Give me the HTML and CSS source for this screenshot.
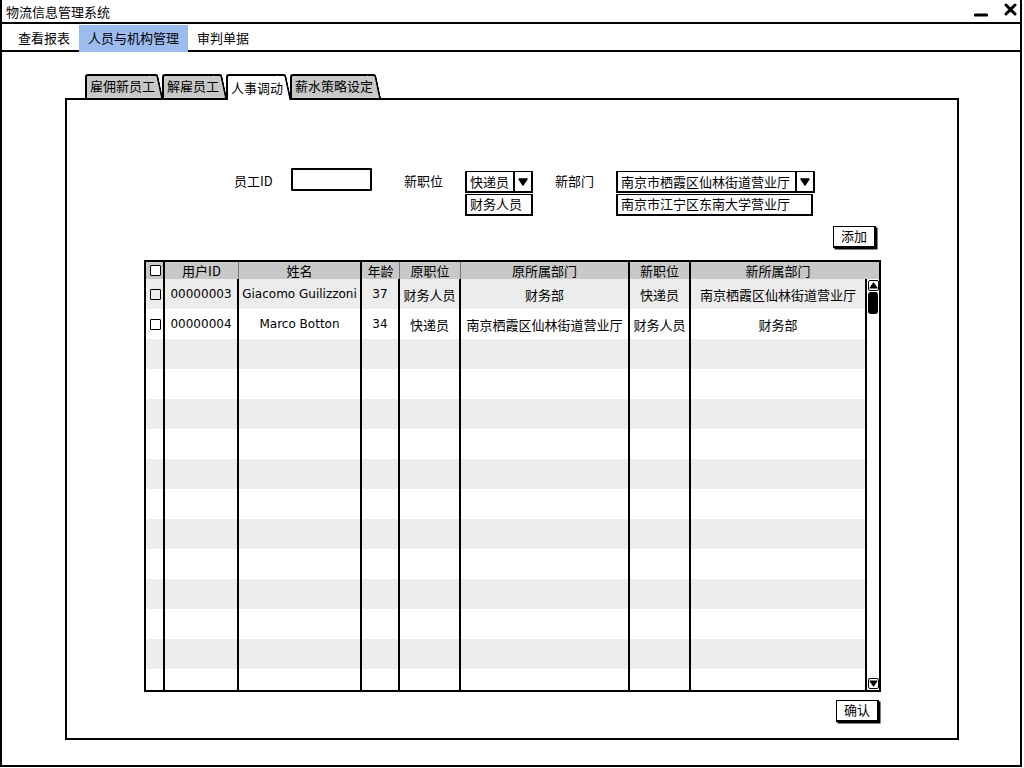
FILE: index.html
```html
<!DOCTYPE html>
<html lang="zh-CN">
<head>
<meta charset="utf-8">
<title>物流信息管理系统</title>
<link rel="stylesheet" href="styles.css">
</head>
<body>
<div class="window">
  <div class="titlebar">
    <span class="title">物流信息管理系统</span>
    <span class="win-ctrls">
      <svg class="ctrl-min" width="14" height="6" viewBox="0 0 14 6"><path d="M1.5 3 H12.5" stroke="#000" stroke-width="3.2" stroke-linecap="round"/></svg>
      <svg class="ctrl-close" width="13" height="13" viewBox="0 0 13 13"><path d="M2 2 L11 11 M11 2 L2 11" stroke="#000" stroke-width="3" stroke-linecap="round"/></svg>
    </span>
  </div>
  <div class="menubar">
    <span class="menu-item">查看报表</span>
    <span class="menu-item active">人员与机构管理</span>
    <span class="menu-item">审判单据</span>
  </div>
  <div class="content">
    <div class="tabs">
      <div class="tab">雇佣新员工</div>
      <div class="tab">解雇员工</div>
      <div class="tab active">人事调动</div>
      <div class="tab">薪水策略设定</div>
    </div>
    <div class="panel">
      <div class="form-row">
        <span class="label lbl-id">员工ID</span>
        <span class="text-input"></span>
        <span class="label lbl-pos">新职位</span>
        <div class="combo combo-pos">
          <div class="select"><span class="sel-text">快递员</span><span class="sel-arrow"><svg width="10" height="8" viewBox="0 0 10 8"><path d="M1 1 H9 L5 7 Z" fill="#000" stroke="#000" stroke-width="1.4" stroke-linejoin="round"/></svg></span></div>
          <div class="option">财务人员</div>
        </div>
        <span class="label lbl-dept">新部门</span>
        <div class="combo combo-dept">
          <div class="select"><span class="sel-text">南京市栖霞区仙林街道营业厅</span><span class="sel-arrow"><svg width="10" height="8" viewBox="0 0 10 8"><path d="M1 1 H9 L5 7 Z" fill="#000" stroke="#000" stroke-width="1.4" stroke-linejoin="round"/></svg></span></div>
          <div class="option">南京市江宁区东南大学营业厅</div>
        </div>
      </div>
      <div class="btn-row add-row"><span class="btn">添加</span></div>
      <div class="grid">
        <div class="thead">
          <span class="th line-b"><span class="check"></span></span>
          <span class="th line-t">用户ID</span>
          <span class="th line-b">姓名</span>
          <span class="th line-t">年龄</span>
          <span class="th line-t">原职位</span>
          <span class="th line-b">原所属部门</span>
          <span class="th line-b">新职位</span>
          <span class="th">新所属部门</span>
          <span class="th"></span>
        </div>
        <div class="tbody">
          <div class="rows">
            <div class="row"><span class="td"><span class="check"></span></span><span class="td lat">00000003</span><span class="td lat">Giacomo Guilizzoni</span><span class="td lat">37</span><span class="td">财务人员</span><span class="td">财务部</span><span class="td">快递员</span><span class="td">南京栖霞区仙林街道营业厅</span></div>
            <div class="row"><span class="td"><span class="check"></span></span><span class="td lat">00000004</span><span class="td lat">Marco Botton</span><span class="td lat">34</span><span class="td">快递员</span><span class="td">南京栖霞区仙林街道营业厅</span><span class="td">财务人员</span><span class="td">财务部</span></div>
            <div class="row"><span class="td"></span><span class="td"></span><span class="td"></span><span class="td"></span><span class="td"></span><span class="td"></span><span class="td"></span><span class="td"></span></div>
            <div class="row"><span class="td"></span><span class="td"></span><span class="td"></span><span class="td"></span><span class="td"></span><span class="td"></span><span class="td"></span><span class="td"></span></div>
            <div class="row"><span class="td"></span><span class="td"></span><span class="td"></span><span class="td"></span><span class="td"></span><span class="td"></span><span class="td"></span><span class="td"></span></div>
            <div class="row"><span class="td"></span><span class="td"></span><span class="td"></span><span class="td"></span><span class="td"></span><span class="td"></span><span class="td"></span><span class="td"></span></div>
            <div class="row"><span class="td"></span><span class="td"></span><span class="td"></span><span class="td"></span><span class="td"></span><span class="td"></span><span class="td"></span><span class="td"></span></div>
            <div class="row"><span class="td"></span><span class="td"></span><span class="td"></span><span class="td"></span><span class="td"></span><span class="td"></span><span class="td"></span><span class="td"></span></div>
            <div class="row"><span class="td"></span><span class="td"></span><span class="td"></span><span class="td"></span><span class="td"></span><span class="td"></span><span class="td"></span><span class="td"></span></div>
            <div class="row"><span class="td"></span><span class="td"></span><span class="td"></span><span class="td"></span><span class="td"></span><span class="td"></span><span class="td"></span><span class="td"></span></div>
            <div class="row"><span class="td"></span><span class="td"></span><span class="td"></span><span class="td"></span><span class="td"></span><span class="td"></span><span class="td"></span><span class="td"></span></div>
            <div class="row"><span class="td"></span><span class="td"></span><span class="td"></span><span class="td"></span><span class="td"></span><span class="td"></span><span class="td"></span><span class="td"></span></div>
            <div class="row"><span class="td"></span><span class="td"></span><span class="td"></span><span class="td"></span><span class="td"></span><span class="td"></span><span class="td"></span><span class="td"></span></div>
            <div class="row"><span class="td"></span><span class="td"></span><span class="td"></span><span class="td"></span><span class="td"></span><span class="td"></span><span class="td"></span><span class="td"></span></div>
          </div>
          <div class="scroll">
            <span class="sb-btn"><svg width="9" height="7" viewBox="0 0 9 7"><path d="M1 6 H8 L4.5 1 Z" fill="#000" stroke="#000" stroke-width="1.2" stroke-linejoin="round"/></svg></span>
            <span class="sb-thumb"></span>
            <span class="sb-space"></span>
            <span class="sb-btn"><svg width="9" height="7" viewBox="0 0 9 7"><path d="M1 1 H8 L4.5 6 Z" fill="#000" stroke="#000" stroke-width="1.2" stroke-linejoin="round"/></svg></span>
          </div>
        </div>
      </div>
      <div class="btn-row confirm-row"><span class="btn">确认</span></div>
    </div>
  </div>
</div>
</body>
</html>
```
FILE: styles.css
```css
* { box-sizing: border-box; }
html, body { margin: 0; padding: 0; background: #fff; }
body {
  font-family: "DejaVu Sans", "Noto Sans CJK SC", sans-serif;
  font-size: 13px;
  color: #000;
}
.window {
  width: 1022px;
  height: 767px;
  border-left: 2px solid #000;
  border-right: 2px solid #000;
  border-bottom: 2px solid #000;
  display: flex;
  flex-direction: column;
}
.titlebar {
  height: 24px;
  border-bottom: 2px solid #000;
  display: flex;
  align-items: center;
  justify-content: space-between;
  padding: 1px 0 0 4px;
}
.title { font-family: "Noto Sans CJK SC", sans-serif; font-size: 13px; line-height: 20px; }
.win-ctrls { display: flex; align-items: center; gap: 16px; padding-right: 3px; }
.ctrl-min { margin-top: 7px; }
.ctrl-close { margin-top: -4px; }
.menubar {
  height: 28px;
  border-bottom: 2px solid #000;
  display: flex;
  padding-left: 7px;
}
.menu-item {
  font-family: "Noto Sans CJK SC", sans-serif;
  padding: 0 9px;
  line-height: 26px;
  height: 27px;
  margin-top: 1px;
}
.menu-item.active { background: #9cbcf0; }
.content { flex: 1; padding: 22px 0 0 63px; }
.tabs { display: flex; height: 24px; padding-left: 20px; }
.tab {
  position: relative;
  z-index: 1;
  height: 24px;
  padding: 0 1px 0 3px;
  margin-right: 6px;
  border: 2px solid #000;
  border-right: none;
  border-bottom: none;
  border-top-left-radius: 3px;
  background: #c8c8c8;
  font-family: "Noto Sans CJK SC", sans-serif;
  line-height: 20px;
}
.tab::after {
  content: "";
  position: absolute;
  z-index: -1;
  top: -2px;
  bottom: 0;
  right: -2px;
  width: 7px;
  background: inherit;
  border-top: 2px solid #000;
  border-right: 2px solid #000;
  border-top-right-radius: 3px;
  transform: skewX(12deg);
  transform-origin: top left;
}
.tab.active {
  background: #fff;
  height: 26px;
  margin-bottom: -2px;
  z-index: 2;
  line-height: 24px;
}
.panel {
  width: 894px;
  height: 642px;
  border: 2px solid #000;
  display: flex;
  flex-direction: column;
}
.form-row {
  display: flex;
  align-items: flex-start;
  margin-top: 68px;
  padding-left: 167px;
}
.label {
  font-family: "Noto Sans CJK SC", sans-serif;
  line-height: 22px;
  margin-top: 2px;
}
.lbl-id { width: 57px; }
.lbl-pos { width: 61px; margin-left: 32px; }
.lbl-dept { width: 61px; margin-left: 22px; }
.text-input {
  width: 81px;
  height: 23px;
  border: 2px solid #000;
  border-radius: 1px;
}
.combo { margin-top: 3px; display: flex; flex-direction: column; font-family: "Noto Sans CJK SC", sans-serif; }
.combo-pos { width: 68px; }
.combo-dept { width: 199px; }
.select {
  height: 22px;
  border: 2px solid #000;
  border-top-width: 1.5px;
  display: flex;
  align-items: stretch;
}
.sel-text { flex: 1; padding-left: 3px; line-height: 19px; white-space: nowrap; overflow: hidden; }
.sel-arrow {
  width: 18px;
  border-left: 2px solid #000;
  display: flex;
  align-items: center;
  justify-content: center;
}
.option {
  height: 22px;
  margin-top: 1px;
  border: 2px solid #000;
  border-top-width: 1px;
  padding-left: 3px;
  line-height: 18px;
  white-space: nowrap;
}
.combo-dept .option { width: 197px; }
.btn-row { display: flex; justify-content: flex-end; }
.add-row { margin-top: 10px; padding-right: 81px; }
.confirm-row { margin-top: 8px; padding-right: 78px; }
.btn {
  width: 43px;
  height: 22px;
  border: 2px solid #000;
  border-top-width: 1.5px;
  border-left-width: 1.5px;
  box-shadow: 1.5px 1.5px 0 #000;
  font-family: "Noto Sans CJK SC", sans-serif;
  text-align: center;
  line-height: 18px;
}
.grid {
  margin: 12px 0 0 77px;
  width: 737px;
  height: 432px;
  border: 2px solid #000;
  display: flex;
  flex-direction: column;
}
.thead, .row {
  display: grid;
  grid-template-columns: 19px 74px 123px 38px 61px 169px 61px 174px;
}
.thead {
  grid-template-columns: 19px 74px 123px 38px 61px 169px 61px 174px 14px;
  height: 17px;
  background: #c8c8c8;
}
.th {
  font-family: "Noto Sans CJK SC", "DejaVu Sans", sans-serif;
  text-align: center;
  line-height: 16px;
  font-size: 13px;
  display: flex;
  align-items: center;
  justify-content: center;
}
.th.line-b { border-right: 2px solid #000; }
.th.line-t { border-right: 1px solid #777; }
.tbody { flex: 1; display: flex; overflow: hidden; }
.rows { width: 719px; overflow: hidden; }
.row { height: 30px; }
.row:nth-child(odd) { background: #ececec; }
.td {
  border-right: 2px solid #000;
  display: flex;
  align-items: center;
  justify-content: center;
  font-family: "Noto Sans CJK SC", sans-serif;
  font-size: 13px;
  white-space: nowrap;
  overflow: hidden;
}
.td.lat { font-family: "DejaVu Sans", sans-serif; font-size: 12px; }
.td:last-child { border-right: none; }
.check {
  display: inline-block;
  width: 11px;
  height: 11px;
  border: 1.5px solid #000;
  border-radius: 1px;
  margin-left: 2px;
}
.thead .check { background: #fff; width: 11px; height: 11px; }
.scroll {
  width: 14px;
  border-left: 2px solid #000;
  display: flex;
  flex-direction: column;
  align-items: center;
  padding: 1px 0 1px;
}
.sb-btn {
  width: 11px;
  height: 11px;
  border: 1px solid #000;
  border-radius: 2px;
  display: flex;
  align-items: center;
  justify-content: center;
  background: #fff;
}
.sb-thumb {
  width: 10px;
  height: 22px;
  margin-top: 1px;
  background: #000;
  border-radius: 3px;
}
.sb-space { flex: 1; }
```
